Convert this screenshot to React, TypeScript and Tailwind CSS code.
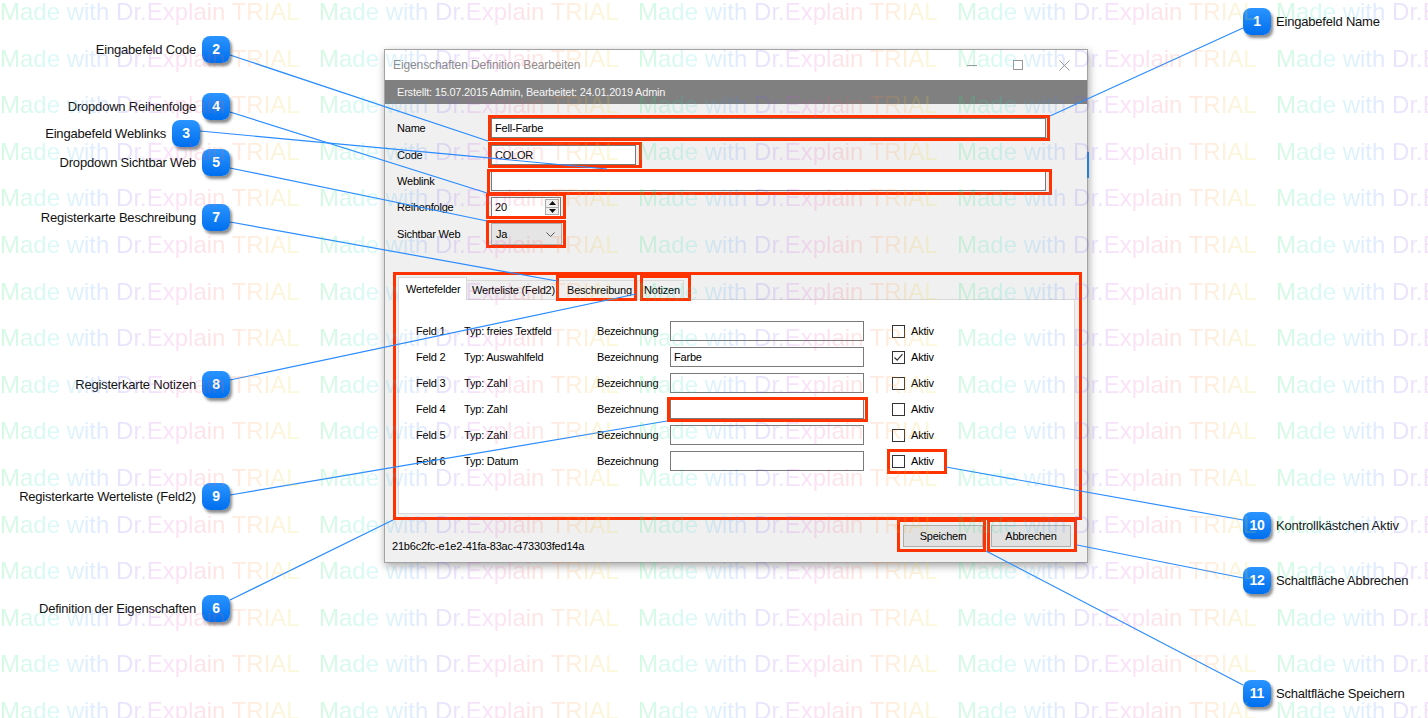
import React from "react";

const wm = "Made with Dr.Explain TRIAL";

const fields = [
  { n: 1, typ: "Typ: freies Textfeld", value: "", checked: false },
  { n: 2, typ: "Typ: Auswahlfeld", value: "Farbe", checked: true },
  { n: 3, typ: "Typ: Zahl", value: "", checked: false },
  { n: 4, typ: "Typ: Zahl", value: "", checked: false },
  { n: 5, typ: "Typ: Zahl", value: "", checked: false },
  { n: 6, typ: "Typ: Datum", value: "", checked: false },
];

// outer edges of the red highlight frames: x1, y1, x2, y2
const frames = [
  [488, 115, 1050, 141],
  [488, 142, 642, 168],
  [487, 169, 1052, 195],
  [486, 193, 566, 219],
  [486, 220, 566, 248],
  [393, 272, 1082, 520],
  [556, 275, 637, 301],
  [640, 275, 691, 301],
  [667, 397, 868, 422],
  [887, 449, 947, 474],
  [897, 519, 986, 552],
  [987, 519, 1077, 552],
];

const leaders = [
  [1243, 28, 1050, 116],
  [230, 55, 488, 141],
  [200, 131, 607, 169],
  [230, 112, 487, 193],
  [230, 168, 487, 221],
  [230, 222, 557, 281],
  [230, 380, 636, 294],
  [230, 495, 667, 421],
  [230, 600, 393, 520],
  [946, 467, 1243, 520],
  [1077, 545, 1243, 578],
  [986, 551, 1243, 685],
];

function Badge({ n }: { n: string }) {
  return (
    <div className="flex h-[27px] w-[28px] shrink-0 items-center justify-center rounded-[8px] bg-[linear-gradient(180deg,#2a94ff,#006fee)] text-[14px] font-bold text-white shadow-[2px_3px_3px_rgba(0,0,0,0.45)]">
      {n}
    </div>
  );
}

function Callout({
  n,
  label,
  side,
  pos,
}: {
  n: string;
  label: string;
  side: "left" | "right";
  pos: string;
}) {
  return (
    <div className={"absolute flex items-center whitespace-nowrap text-[13px] tracking-[-0.2px] text-[#111] " + pos}>
      {side === "left" ? (
        <>
          <span className="mr-[6px]">{label}</span>
          <Badge n={n} />
        </>
      ) : (
        <>
          <Badge n={n} />
          <span className="ml-[5px]">{label}</span>
        </>
      )}
    </div>
  );
}

function Watermark() {
  const rows = Array.from({ length: 16 });
  const cols = Array.from({ length: 5 });
  return (
    <div className="pointer-events-none absolute inset-0 overflow-hidden text-[24px] leading-[24px]">
      {rows.map((_, r) => (
        <div key={r} className="flex h-[46.6px] whitespace-nowrap">
          {cols.map((_, c) => (
            <div key={c} className="w-[319px] shrink-0">
              <span className="bg-[linear-gradient(90deg,rgba(40,230,110,0.2)_0%,rgba(40,225,210,0.17)_18%,rgba(60,150,255,0.17)_30%,rgba(120,90,240,0.17)_42%,rgba(230,80,220,0.17)_56%,rgba(250,90,100,0.17)_70%,rgba(255,150,60,0.17)_84%,rgba(225,230,60,0.2)_100%)] bg-clip-text text-transparent">
                {wm}
              </span>
            </div>
          ))}
        </div>
      ))}
    </div>
  );
}

function TextBox({ w, children }: { w: string; children?: React.ReactNode }) {
  return (
    <div className={"flex h-[20px] items-center border border-[#7a7a7a] bg-white px-[3px] " + w}>
      {children}
    </div>
  );
}

function Dialog() {
  return (
    <div className="ml-[384px] flex h-[514px] w-[704px] flex-col border border-[#a3a3a3] bg-[#f0f0f0] text-[11px] tracking-[-0.2px] text-black shadow-[1px_3px_8px_rgba(0,0,0,0.35)]">
      {/* title bar */}
      <div className="flex h-[30px] shrink-0 items-center bg-white">
        <span className="pl-[8px] text-[12px] tracking-[-0.1px] text-[#8c8c8c]">
          Eigenschaften Definition Bearbeiten
        </span>
        <div className="ml-auto flex h-full">
          <div className="flex w-[46px] items-center justify-center">
            <div className="h-px w-[10px] bg-[#999]" />
          </div>
          <div className="flex w-[46px] items-center justify-center">
            <div className="h-[10px] w-[10px] border border-[#999]" />
          </div>
          <div className="flex w-[46px] items-center justify-center">
            <svg width="11" height="11" viewBox="0 0 11 11">
              <path d="M0.5 0.5 L10.5 10.5 M10.5 0.5 L0.5 10.5" stroke="#999" strokeWidth="1" />
            </svg>
          </div>
        </div>
      </div>

      <div className="flex h-[24px] shrink-0 items-center bg-[#808080] pl-[12px] text-[#f5f5f5]">
        Erstellt: 15.07.2015 Admin, Bearbeitet: 24.01.2019 Admin
      </div>

      {/* form */}
      <div className="ml-[12px] mt-[14px] flex h-[20px] items-center">
        <span className="w-[94px]">Name</span>
        <TextBox w="w-[555px]">Fell-Farbe</TextBox>
      </div>
      <div className="ml-[12px] mt-[7px] flex h-[20px] items-center">
        <span className="w-[94px]">Code</span>
        <TextBox w="w-[145px]">COLOR</TextBox>
      </div>
      <div className="ml-[12px] mt-[6px] flex h-[20px] items-center">
        <span className="w-[94px]">Weblink</span>
        <TextBox w="w-[555px]" />
      </div>
      <div className="ml-[12px] mt-[6px] flex h-[20px] items-center">
        <span className="w-[94px]">Reihenfolge</span>
        <div className="flex h-[20px] w-[70px] items-center border border-[#7a7a7a] bg-white pl-[3px]">
          <span className="flex-1">20</span>
          <div className="mr-px flex h-[16px] w-[14px] flex-col border border-[#acacac] bg-[#f0f0f0]">
            <div className="flex flex-1 items-center justify-center border-b border-[#acacac]">
              <svg width="7" height="4" viewBox="0 0 7 4">
                <path d="M0 4 L3.5 0 L7 4 Z" fill="#111" />
              </svg>
            </div>
            <div className="flex flex-1 items-center justify-center">
              <svg width="7" height="4" viewBox="0 0 7 4">
                <path d="M0 0 L3.5 4 L7 0 Z" fill="#111" />
              </svg>
            </div>
          </div>
        </div>
      </div>
      <div className="ml-[12px] mt-[6px] flex h-[22px] items-center">
        <span className="w-[94px]">Sichtbar Web</span>
        <div className="flex h-[22px] w-[71px] items-center border border-[#acacac] bg-[#e5e5e5] pl-[4px] pr-[6px]">
          <span className="flex-1">Ja</span>
          <svg width="9" height="5" viewBox="0 0 9 5">
            <path d="M0.5 0.5 L4.5 4.5 L8.5 0.5" fill="none" stroke="#555" strokeWidth="1" />
          </svg>
        </div>
      </div>

      {/* tab control */}
      <div className="ml-[13px] mt-[32px] flex w-[677px] flex-col">
        <div className="flex h-[23px] items-end">
          <div className="relative z-10 flex h-[23px] w-[69px] items-start border border-b-0 border-[#d9d9d9] bg-white pl-[7px] pt-[3px]">
            Wertefelder
          </div>
          <div className="flex h-[20px] w-[91px] items-center border border-b-0 border-l-0 border-[#d9d9d9] pl-[5px]">
            Werteliste (Feld2)
          </div>
          <div className="flex h-[20px] w-[80px] items-center border border-b-0 border-l-0 border-[#d9d9d9] pl-[9px]">
            Beschreibung
          </div>
          <div className="flex h-[20px] w-[46px] items-center border border-b-0 border-l-0 border-[#d9d9d9] pl-[6px]">
            Notizen
          </div>
        </div>
        <div className="-mt-px h-[215px] border border-[#d9d9d9] bg-white pl-[17px] pt-[18px]">
          {fields.map((f) => (
            <div key={f.n} className="flex h-[26px] items-center">
              <span className="w-[48px]">Feld {f.n}</span>
              <span className="w-[133px]">{f.typ}</span>
              <span className="w-[73px]">Bezeichnung</span>
              <TextBox w="w-[194px]">{f.value}</TextBox>
              <div className="ml-[28px] flex h-[13px] w-[13px] items-center justify-center border border-[#333] bg-white">
                {f.checked && (
                  <svg width="11" height="11" viewBox="0 0 11 11">
                    <path d="M1.5 5.5 L4.2 8.2 L9.5 2.2" fill="none" stroke="#333" strokeWidth="1.2" />
                  </svg>
                )}
              </div>
              <span className="ml-[6px]">Aktiv</span>
            </div>
          ))}
        </div>
      </div>

      {/* footer */}
      <div className="mt-[11px] flex items-start pl-[7px] pr-[16px]">
        <span className="mt-[14px] leading-[14px]">21b6c2fc-e1e2-41fa-83ac-473303fed14a</span>
        <div className="ml-auto flex gap-[8px]">
          <div className="flex h-[22px] w-[80px] items-center justify-center border border-[#adadad] bg-[#e1e1e1]">
            <span>
              Speiche<span className="tracking-[-1.2px]">r</span>n
            </span>
          </div>
          <div className="flex h-[22px] w-[80px] items-center justify-center border border-[#adadad] bg-[#e1e1e1]">
            Abbrechen
          </div>
        </div>
      </div>
    </div>
  );
}

export default function App() {
  return (
    <div className="relative h-[718px] w-[1428px] overflow-hidden bg-white pt-[49px] font-['Liberation_Sans',Arial,sans-serif]">
      <Dialog />

      {/* bit of the window behind the dialog */}
      <div className="absolute left-[1087px] top-[152px] h-[26px] w-[2px] bg-[#2a7fd4]" />

      <svg className="pointer-events-none absolute inset-0" width="1428" height="718">
        {frames.map(([x1, y1, x2, y2], i) => (
          <rect
            key={i}
            x={x1 + 1.5}
            y={y1 + 1.5}
            width={x2 - x1 - 3}
            height={y2 - y1 - 3}
            fill="none"
            stroke="#ff3300"
            strokeWidth="3"
          />
        ))}
        {leaders.map(([x1, y1, x2, y2], i) => (
          <line key={i} x1={x1} y1={y1} x2={x2} y2={y2} stroke="#2a8cff" strokeWidth="1.2" />
        ))}
      </svg>

      <Callout n="1" side="right" label="Eingabefeld Name" pos="left-[1243px] top-[8px]" />
      <Callout n="2" side="left" label="Eingabefeld Code" pos="right-[1198px] top-[36px]" />
      <Callout n="4" side="left" label="Dropdown Reihenfolge" pos="right-[1198px] top-[93px]" />
      <Callout n="3" side="left" label="Eingabefeld Weblinks" pos="right-[1228px] top-[120px]" />
      <Callout n="5" side="left" label="Dropdown Sichtbar Web" pos="right-[1198px] top-[149px]" />
      <Callout n="7" side="left" label="Registerkarte Beschreibung" pos="right-[1198px] top-[204px]" />
      <Callout n="8" side="left" label="Registerkarte Notizen" pos="right-[1198px] top-[371px]" />
      <Callout n="9" side="left" label="Registerkarte Werteliste (Feld2)" pos="right-[1198px] top-[483px]" />
      <Callout n="6" side="left" label="Definition der Eigenschaften" pos="right-[1198px] top-[595px]" />
      <Callout n="10" side="right" label="Kontrollkästchen Aktiv" pos="left-[1243px] top-[512px]" />
      <Callout n="12" side="right" label="Schaltfläche Abbrechen" pos="left-[1243px] top-[567px]" />
      <Callout n="11" side="right" label="Schaltfläche Speichern" pos="left-[1243px] top-[680px]" />

      <Watermark />
    </div>
  );
}
